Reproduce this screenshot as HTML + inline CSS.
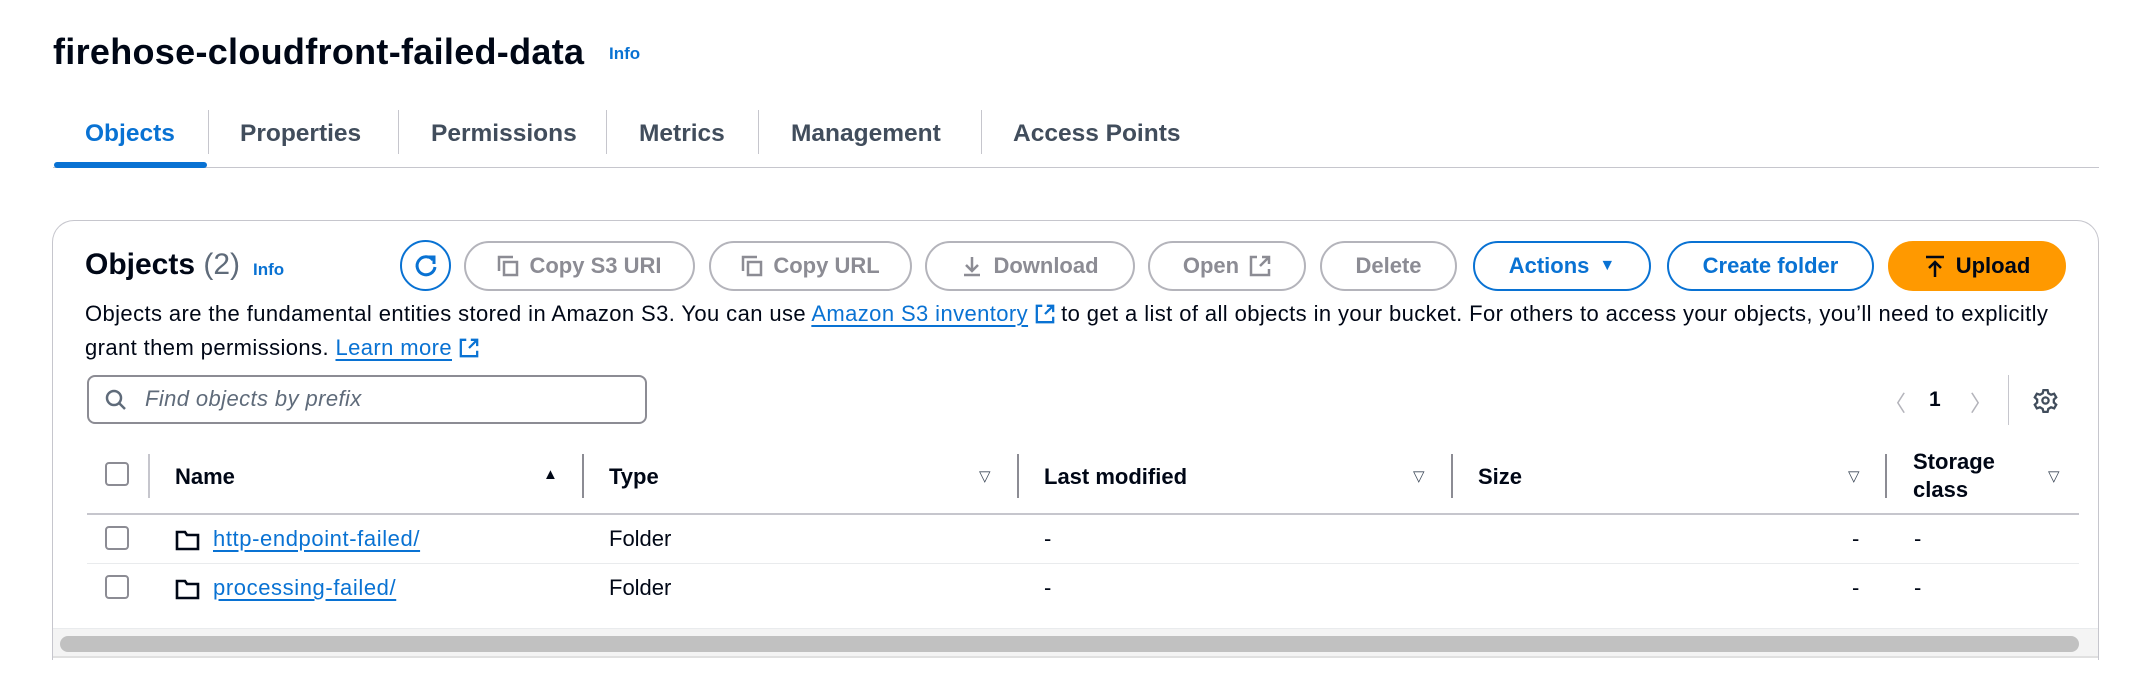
<!DOCTYPE html>
<html><head><meta charset="utf-8"><style>
*{box-sizing:border-box;margin:0;padding:0}
body{width:2140px;height:698px;background:#fff;font-family:"Liberation Sans",sans-serif;color:#000716;position:relative;overflow:hidden}
.a{position:absolute;white-space:nowrap}
.tab{position:absolute;top:120px;font-size:24.5px;font-weight:bold;color:#414d5c}
.vsep{position:absolute;width:1px;background:#c6c6cd}
.btn{position:absolute;top:241px;height:50px;border:2px solid #b4b4bb;border-radius:26px;font-size:22px;font-weight:bold;color:#8c8c94;display:flex;align-items:center;justify-content:center;gap:10px}
.blue{border-color:#0972d3;color:#0972d3}
.hd{position:absolute;font-size:22px;font-weight:bold;color:#000716}
.cb{position:absolute;width:24px;height:24px;border:2px solid #8c8c94;border-radius:4px}
.tri{position:absolute;font-size:15px;color:#414d5c}
a{color:#0972d3;text-decoration:underline;text-underline-offset:4px;text-decoration-thickness:2px}
.cell{position:absolute;font-size:22px}
</style></head><body>
<div class="a" style="left:53px;top:31px;font-size:36px;font-weight:bold;letter-spacing:0.3px">firehose-cloudfront-failed-data</div>
<div class="a" style="left:609px;top:44px;font-size:17px;font-weight:bold;color:#0972d3">Info</div>

<div class="tab" style="left:85px;color:#0972d3">Objects</div>
<div class="tab" style="left:240px">Properties</div>
<div class="tab" style="left:431px">Permissions</div>
<div class="tab" style="left:639px">Metrics</div>
<div class="tab" style="left:791px">Management</div>
<div class="tab" style="left:1013px">Access Points</div>
<div class="vsep" style="left:208px;top:110px;height:44px"></div>
<div class="vsep" style="left:398px;top:110px;height:44px"></div>
<div class="vsep" style="left:606px;top:110px;height:44px"></div>
<div class="vsep" style="left:758px;top:110px;height:44px"></div>
<div class="vsep" style="left:981px;top:110px;height:44px"></div>
<div class="a" style="left:53px;top:167px;width:2046px;height:1px;background:#c6c6cd"></div>
<div class="a" style="left:54px;top:162px;width:153px;height:6px;background:#0972d3;border-radius:3px"></div>

<div class="a" style="left:52px;top:220px;width:2047px;height:440px;border:1px solid #c6c6cd;border-radius:22px 22px 0 0;border-bottom:none"></div>
<div class="a" style="left:85px;top:248px;font-size:30px;font-weight:bold">Objects <span style="font-weight:normal;color:#5f6b7a">(2)</span></div>
<div class="a" style="left:253px;top:260px;font-size:17px;font-weight:bold;color:#0972d3">Info</div>

<div class="a" style="left:400px;top:240px;width:51px;height:51px;border:2px solid #0972d3;border-radius:50%"></div>
<svg class="a" style="left:412px;top:252px" width="28" height="28" viewBox="0 0 28 28"><path d="M21 8 A9 9 0 1 0 23 15" fill="none" stroke="#0972d3" stroke-width="3"/><path d="M15 5 L22 5 L22 12" fill="none" stroke="#0972d3" stroke-width="3"/></svg>

<div class="btn" style="left:464px;width:231px"><svg width="22" height="22" viewBox="0 0 22 22" fill="none" stroke="#8c8c94" stroke-width="2.5"><path d="M2 16V2h14"/><rect x="7" y="7" width="13" height="13"/></svg>Copy S3 URI</div>
<div class="btn" style="left:709px;width:203px"><svg width="22" height="22" viewBox="0 0 22 22" fill="none" stroke="#8c8c94" stroke-width="2.5"><path d="M2 16V2h14"/><rect x="7" y="7" width="13" height="13"/></svg>Copy URL</div>
<div class="btn" style="left:925px;width:210px"><svg width="22" height="22" viewBox="0 0 22 22" fill="none" stroke="#8c8c94" stroke-width="2.5"><path d="M11 2v14M5 10l6 6 6-6M3 20h16"/></svg>Download</div>
<div class="btn" style="left:1148px;width:158px">Open <svg width="22" height="22" viewBox="0 0 22 22" fill="none" stroke="#8c8c94" stroke-width="2.5"><path d="M8 2H2v18h18v-6M13 2h7v7M20 2l-9 9"/></svg></div>
<div class="btn" style="left:1320px;width:137px">Delete</div>
<div class="btn blue" style="left:1473px;width:178px">Actions <span style="font-size:16px">▼</span></div>
<div class="btn blue" style="left:1667px;width:207px">Create folder</div>
<div class="btn" style="left:1888px;width:178px;background:#ff9900;border-color:#ff9900;color:#000716"><svg width="22" height="24" viewBox="0 0 22 24" fill="none" stroke="#000716" stroke-width="2.5"><path d="M2 3h18M11 23V8M5 14l6-6 6 6"/></svg>Upload</div>

<div class="a" style="left:85px;top:297px;font-size:22px;line-height:34px;letter-spacing:0.4px;color:#000716">Objects are the fundamental entities stored in Amazon S3. You can use <a>Amazon S3 inventory</a> <svg width="20" height="20" viewBox="0 0 22 22" fill="none" stroke="#0972d3" stroke-width="2.5" style="vertical-align:-3px"><path d="M8 2H2v18h18v-6M13 2h7v7M20 2l-9 9"/></svg> to get a list of all objects in your bucket. For others to access your objects, you’ll need to explicitly<br>grant them permissions. <a>Learn more</a> <svg width="20" height="20" viewBox="0 0 22 22" fill="none" stroke="#0972d3" stroke-width="2.5" style="vertical-align:-3px"><path d="M8 2H2v18h18v-6M13 2h7v7M20 2l-9 9"/></svg></div>

<div class="a" style="left:87px;top:375px;width:560px;height:49px;border:2px solid #8c8c94;border-radius:8px"></div>
<svg class="a" style="left:104px;top:388px" width="24" height="24" viewBox="0 0 24 24" fill="none" stroke="#5f6b7a" stroke-width="2.5"><circle cx="10" cy="10" r="7"/><path d="M15 15l6 6"/></svg>
<div class="a" style="left:145px;top:386px;font-size:22px;letter-spacing:0.4px;font-style:italic;color:#5f6b7a">Find objects by prefix</div>

<div class="a" style="left:1884px;top:386px;font-size:22px;color:#b4b4bb">〈</div>
<div class="a" style="left:1929px;top:388px;font-size:21px;font-weight:bold">1</div>
<div class="a" style="left:1970px;top:386px;font-size:22px;color:#b4b4bb">〉</div>
<div class="vsep" style="left:2008px;top:375px;height:50px"></div>
<svg class="a" style="left:2033px;top:388px" width="25" height="25" viewBox="0 0 24 24" fill="none" stroke="#414d5c" stroke-width="2.2"><circle cx="12" cy="12" r="3"/><path d="M10 2h4l.7 3 2.6 1.5 3-1 2 3.5-2.3 2.1v2.8l2.3 2.1-2 3.5-3-1-2.6 1.5-.7 3h-4l-.7-3-2.6-1.5-3 1-2-3.5 2.3-2.1v-2.8L1.7 9l2-3.5 3 1L9.3 5z"/></svg>

<div class="cb" style="left:105px;top:462px"></div>
<div class="vsep" style="left:148px;top:454px;height:44px;width:2px"></div>
<div class="hd" style="left:175px;top:464px">Name</div>
<div class="tri" style="left:543px;top:466px;color:#000716">▲</div>
<div class="vsep" style="left:582px;top:454px;height:44px;width:2px;background:#8c8c94"></div>
<div class="hd" style="left:609px;top:464px">Type</div>
<div class="tri" style="left:979px;top:467px">▽</div>
<div class="vsep" style="left:1017px;top:454px;height:44px;width:2px;background:#8c8c94"></div>
<div class="hd" style="left:1044px;top:464px">Last modified</div>
<div class="tri" style="left:1413px;top:467px">▽</div>
<div class="vsep" style="left:1451px;top:454px;height:44px;width:2px;background:#8c8c94"></div>
<div class="hd" style="left:1478px;top:464px">Size</div>
<div class="tri" style="left:1848px;top:467px">▽</div>
<div class="vsep" style="left:1885px;top:454px;height:44px;width:2px;background:#8c8c94"></div>
<div class="hd" style="left:1913px;top:448px;line-height:28px">Storage<br>class</div>
<div class="tri" style="left:2048px;top:467px">▽</div>
<div class="a" style="left:87px;top:513px;width:1992px;height:2px;background:#c6c6cd"></div>

<div class="cb" style="left:105px;top:526px"></div>
<svg class="a" style="left:175px;top:530px" width="25" height="21" viewBox="0 0 25 21" fill="none" stroke="#000716" stroke-width="2.6"><path d="M2 2h8l2 3h11v14H2z"/></svg>
<div class="cell" style="left:213px;top:526px;letter-spacing:0.6px"><a>http-endpoint-failed/</a></div>
<div class="cell" style="left:609px;top:526px">Folder</div>
<div class="cell" style="left:1044px;top:526px">-</div>
<div class="cell" style="left:1852px;top:526px">-</div>
<div class="cell" style="left:1914px;top:526px">-</div>
<div class="a" style="left:87px;top:563px;width:1992px;height:1px;background:#e9ebed"></div>

<div class="cb" style="left:105px;top:575px"></div>
<svg class="a" style="left:175px;top:579px" width="25" height="21" viewBox="0 0 25 21" fill="none" stroke="#000716" stroke-width="2.6"><path d="M2 2h8l2 3h11v14H2z"/></svg>
<div class="cell" style="left:213px;top:575px;letter-spacing:0.6px"><a>processing-failed/</a></div>
<div class="cell" style="left:609px;top:575px">Folder</div>
<div class="cell" style="left:1044px;top:575px">-</div>
<div class="cell" style="left:1852px;top:575px">-</div>
<div class="cell" style="left:1914px;top:575px">-</div>

<div class="a" style="left:53px;top:628px;width:2045px;height:30px;background:#f4f4f4;border-top:1px solid #e9ebed;border-bottom:2px solid #e0e0e0"></div>
<div class="a" style="left:60px;top:636px;width:2019px;height:16px;background:#c1c1c1;border-radius:8px"></div>
</body></html>
